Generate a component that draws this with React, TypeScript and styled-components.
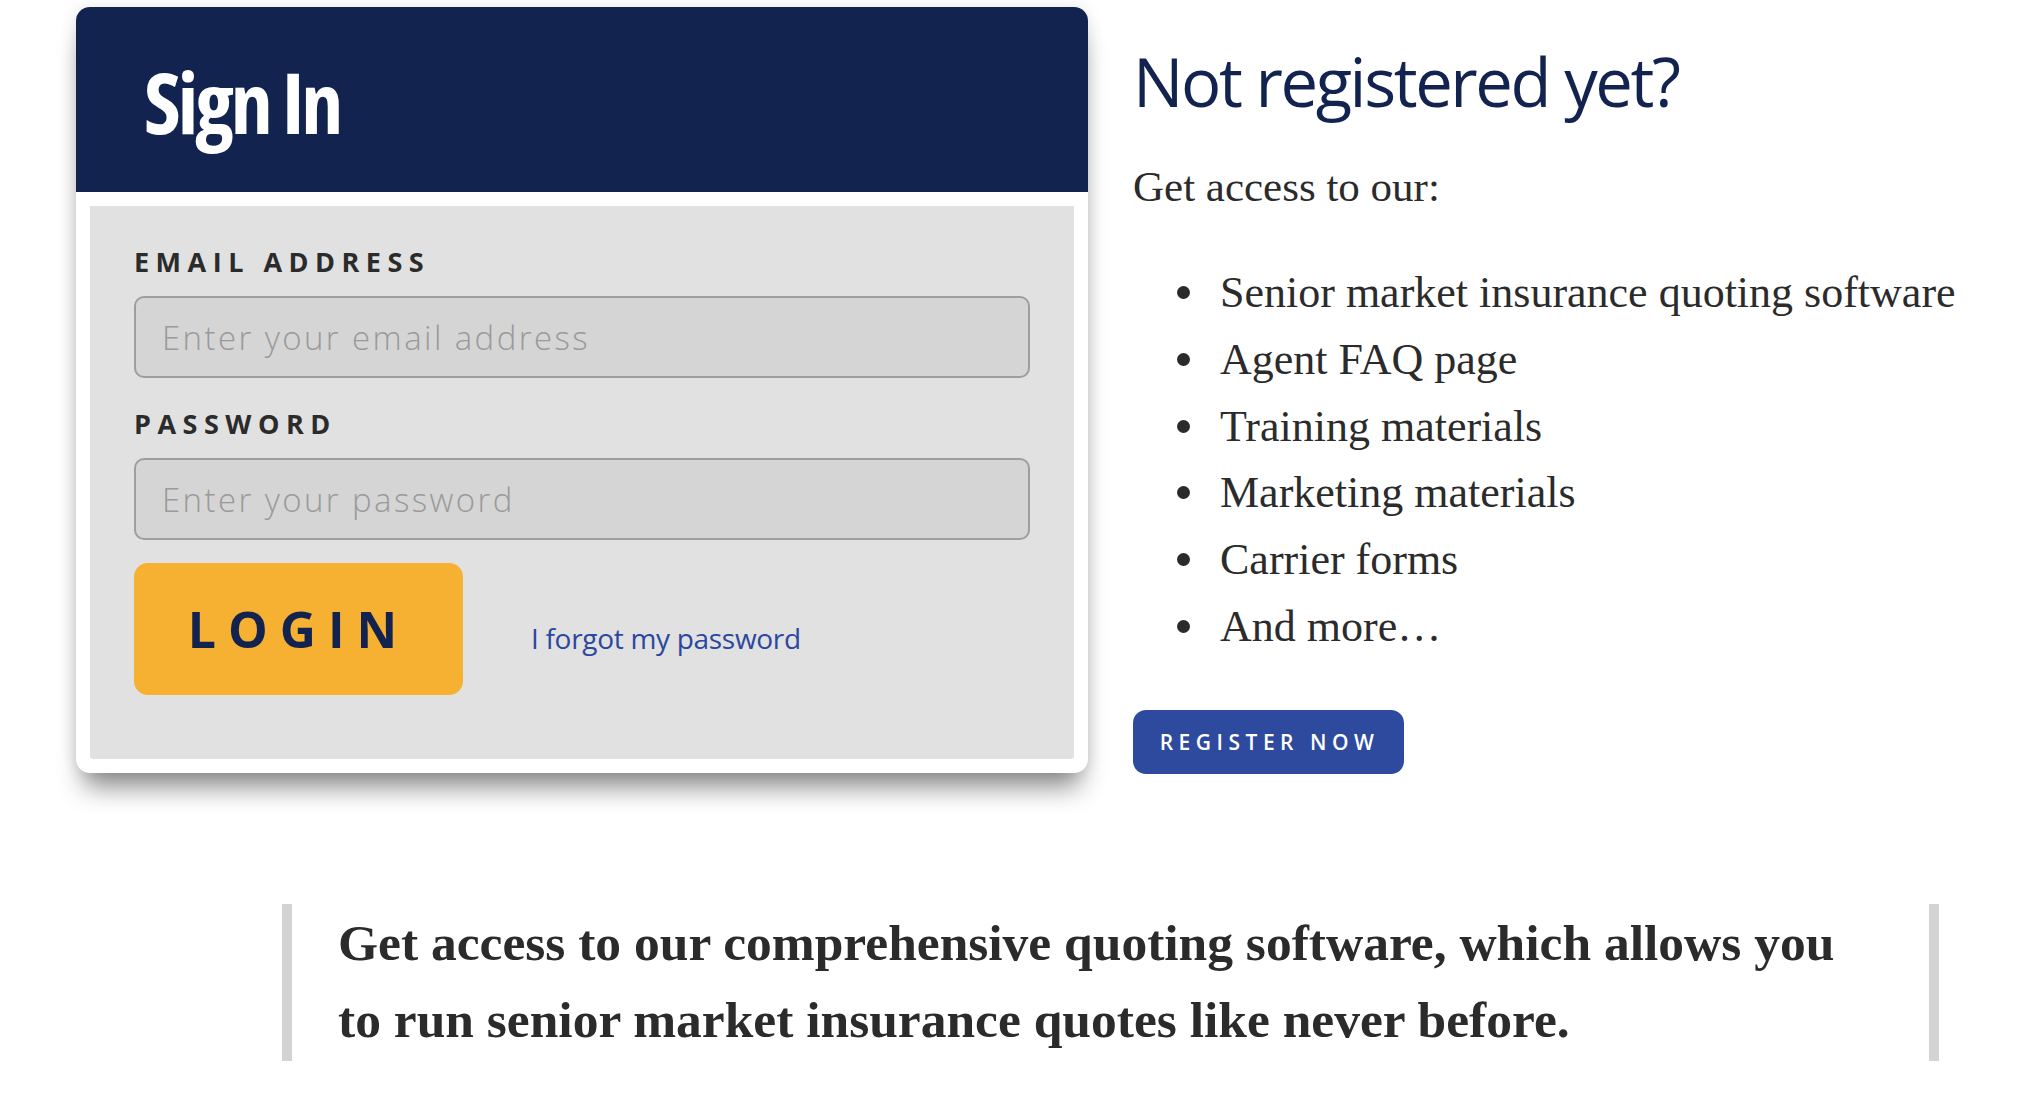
import React from "react";
import styled, { createGlobalStyle } from "styled-components";

const GlobalStyle = createGlobalStyle`
	* { box-sizing: border-box; }
	body {
		margin: 0;
		background: #ffffff;
		font-family: "Open Sans", "Liberation Sans", sans-serif;
	}
`;

const Page = styled.div`
	padding: 7px 0 0 76px;
	width: 2038px;
	height: 1096px;
	overflow: hidden;
`;

const Top = styled.div`
	display: flex;
	align-items: flex-start;
	gap: 45px;
`;

const Card = styled.div`
	width: 1012px;
	background: #ffffff;
	border-radius: 14px;
	overflow: hidden;
	padding-bottom: 14px;
	box-shadow: 0 22px 26px -8px rgba(0, 0, 0, 0.45),
		0 0 16px rgba(0, 0, 0, 0.1);
`;

const Header = styled.div`
	height: 185px;
	background: #13234f;
	display: flex;
	align-items: center;
	padding: 4px 0 0 68px;

	h1 {
		margin: 0;
		color: #ffffff;
		font-family: "Open Sans", sans-serif;
		font-weight: 700;
		font-size: 84px;
		line-height: 1;
		font-stretch: 75%;
		letter-spacing: -3px;
	}
`;

const Panel = styled.form`
	margin: 14px 14px 0 14px;
	background: #e1e1e1;
	border-radius: 0 0 3px 3px;
	padding: 42px 44px 64px 44px;
	display: flex;
	flex-direction: column;
`;

const Label = styled.label<{ $gap?: number }>`
	display: block;
	margin-top: ${(p) => p.$gap ?? 0}px;
	margin-bottom: 20px;
	font-size: 27px;
	line-height: 28px;
	font-weight: 700;
	letter-spacing: 6.5px;
	color: #2b2b2b;
`;

const Input = styled.input`
	display: block;
	width: 100%;
	height: 82px;
	border: 2px solid #9e9e9e;
	border-radius: 10px;
	background: #d5d5d5;
	padding: 0 26px;
	font-family: "Open Sans", sans-serif;
	font-weight: 300;
	font-size: 33px;
	letter-spacing: 2.4px;
	color: #333;
	outline: none;

	&::placeholder {
		color: #9a9a9a;
	}
`;

const Actions = styled.div`
	display: flex;
	align-items: center;
	margin-top: 23px;
	gap: 68px;
`;

const LoginButton = styled.button`
	width: 329px;
	height: 132px;
	border: none;
	border-radius: 14px;
	background: #f6b032;
	color: #13234f;
	font-family: "Open Sans", sans-serif;
	font-weight: 700;
	font-size: 50px;
	letter-spacing: 12px;
	padding: 0;
	cursor: pointer;
`;

const ForgotLink = styled.a`
	margin-top: 18px;
	color: #2b47a0;
	font-size: 28px;
	text-decoration: none;
	letter-spacing: -0.3px;
`;

const Side = styled.div`
	padding-top: 41px;
	display: flex;
	flex-direction: column;
	align-items: flex-start;
`;

const SideTitle = styled.h2`
	margin: 0;
	color: #13234f;
	font-family: "Open Sans", sans-serif;
	font-weight: 400;
	font-size: 67px;
	line-height: 67px;
	letter-spacing: -2.4px;
`;

const Intro = styled.p`
	margin: 46px 0 0;
	font-family: "Liberation Serif", serif;
	font-size: 43px;
	line-height: 52px;
	color: #2b2b2b;
`;

const Perks = styled.ul`
	list-style: none;
	margin: 47px 0 0;
	padding: 0 0 0 44px;
`;

const Perk = styled.li`
	position: relative;
	padding-left: 43px;
	font-family: "Liberation Serif", serif;
	font-size: 44px;
	line-height: 66.8px;
	color: #2b2b2b;

	&::before {
		content: "";
		position: absolute;
		left: 0;
		top: 26px;
		width: 13px;
		height: 13px;
		border-radius: 50%;
		background: #2b2b2b;
	}
`;

const RegisterButton = styled.button`
	margin-top: 49px;
	width: 271px;
	height: 64px;
	border: none;
	border-radius: 13px;
	background: #2e4a9f;
	color: #ffffff;
	font-family: "Open Sans", sans-serif;
	font-weight: 600;
	font-size: 21px;
	letter-spacing: 5.5px;
	padding: 0 0 0 2px;
	cursor: pointer;
`;

const Quote = styled.blockquote`
	margin: 130px 0 0 206px;
	width: 1657px;
	border-left: 10px solid #d3d3d3;
	border-right: 10px solid #d3d3d3;
	padding: 0 60px 3px 46px;
	font-family: "Liberation Serif", serif;
	font-weight: 700;
	font-size: 51.5px;
	line-height: 77px;
	color: #2b2b2b;
`;

const perks = [
	"Senior market insurance quoting software",
	"Agent FAQ page",
	"Training materials",
	"Marketing materials",
	"Carrier forms",
	"And more…",
];

const App = () => {
	return (
		<>
			<GlobalStyle />
			<Page>
				<Top>
					<Card>
						<Header>
							<h1>Sign In</h1>
						</Header>
						<Panel onSubmit={(e) => e.preventDefault()}>
							<Label htmlFor="email">EMAIL ADDRESS</Label>
							<Input id="email" type="email" placeholder="Enter your email address" />
							<Label htmlFor="password" $gap={32}>
								PASSWORD
							</Label>
							<Input id="password" type="password" placeholder="Enter your password" />
							<Actions>
								<LoginButton type="submit">LOGIN</LoginButton>
								<ForgotLink href="#">I forgot my password</ForgotLink>
							</Actions>
						</Panel>
					</Card>
					<Side>
						<SideTitle>Not registered yet?</SideTitle>
						<Intro>Get access to our:</Intro>
						<Perks>
							{perks.map((p) => (
								<Perk key={p}>{p}</Perk>
							))}
						</Perks>
						<RegisterButton>REGISTER NOW</RegisterButton>
					</Side>
				</Top>
				<Quote>
					Get access to our comprehensive quoting software, which allows you to run
					senior market insurance quotes like never before.
				</Quote>
			</Page>
		</>
	);
};

export default App;
